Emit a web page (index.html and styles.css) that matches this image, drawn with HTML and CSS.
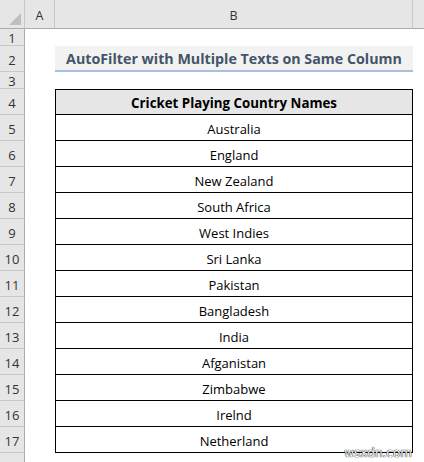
FILE: index.html
```html
<!DOCTYPE html>
<html>
<head>
<meta charset="utf-8">
<link rel="stylesheet" href="styles.css">
</head>
<body>
<div class="sheet">
  <div class="corner"><svg width="12" height="12" viewBox="0 0 12 12"><polygon points="12,0 12,12 0,12" fill="#bfbfbf"/></svg></div>
  <div class="colhead">A</div>
  <div class="colhead">B</div>
  <div class="colhead last"></div>

  <div class="rowhead">1</div><div class="cell"></div><div class="cell"></div><div class="cell"></div>
  <div class="rowhead">2</div><div class="cell"></div><div class="cell titlecell"><span class="title">AutoFilter with Multiple Texts on Same Column</span></div><div class="cell"></div>
  <div class="rowhead">3</div><div class="cell"></div><div class="cell"></div><div class="cell"></div>
  <div class="rowhead">4</div><div class="cell"></div><div class="cell thead">Cricket Playing Country Names</div><div class="cell"></div>
  <div class="rowhead">5</div><div class="cell"></div><div class="cell td">Australia</div><div class="cell"></div>
  <div class="rowhead">6</div><div class="cell"></div><div class="cell td">England</div><div class="cell"></div>
  <div class="rowhead">7</div><div class="cell"></div><div class="cell td">New Zealand</div><div class="cell"></div>
  <div class="rowhead">8</div><div class="cell"></div><div class="cell td">South Africa</div><div class="cell"></div>
  <div class="rowhead">9</div><div class="cell"></div><div class="cell td">West Indies</div><div class="cell"></div>
  <div class="rowhead">10</div><div class="cell"></div><div class="cell td">Sri Lanka</div><div class="cell"></div>
  <div class="rowhead">11</div><div class="cell"></div><div class="cell td">Pakistan</div><div class="cell"></div>
  <div class="rowhead">12</div><div class="cell"></div><div class="cell td">Bangladesh</div><div class="cell"></div>
  <div class="rowhead">13</div><div class="cell"></div><div class="cell td">India</div><div class="cell"></div>
  <div class="rowhead">14</div><div class="cell"></div><div class="cell td">Afganistan</div><div class="cell"></div>
  <div class="rowhead">15</div><div class="cell"></div><div class="cell td">Zimbabwe</div><div class="cell"></div>
  <div class="rowhead">16</div><div class="cell"></div><div class="cell td">Irelnd</div><div class="cell"></div>
  <div class="rowhead">17</div><div class="cell"></div><div class="cell td lastrow">Netherland</div><div class="cell"></div>
  <div class="rowhead"></div><div class="cell"></div><div class="cell"></div><div class="cell"></div>
</div>
<div class="watermark">wsxdn.com</div>
</body>
</html>
```
FILE: styles.css
```css
html, body {
  margin: 0;
  padding: 0;
  background: #ffffff;
}
body {
  width: 424px;
  height: 462px;
  overflow: hidden;
  position: relative;
  font-family: "Open Sans", "Liberation Sans", sans-serif;
}
.sheet {
  display: grid;
  grid-template-columns: 25px 30px 358px 11px;
  grid-template-rows: 29px 17px 26px 17px 26px repeat(13, 26px) 20px;
}
.corner {
  background: #e6e6e6;
  border-right: 1px solid #c8c8c8;
  border-bottom: 1px solid #ababab;
  box-sizing: border-box;
  display: flex;
  align-items: flex-end;
  justify-content: flex-end;
  padding: 0 3px 3px 0;
}
.colhead {
  background: #e6e6e6;
  border-right: 1px solid #c8c8c8;
  border-bottom: 1px solid #ababab;
  box-sizing: border-box;
  display: flex;
  align-items: center;
  justify-content: center;
  font-size: 12.5px;
  color: #333;
  padding-top: 2px;
}
.colhead.last { border-right: none; }
.rowhead {
  background: #e6e6e6;
  border-right: 1px solid #ababab;
  border-bottom: 1px solid #c8c8c8;
  box-sizing: border-box;
  display: flex;
  align-items: center;
  justify-content: center;
  font-size: 13px;
  color: #333;
  padding-top: 2px;
}
.cell {
  box-sizing: border-box;
}
.titlecell {
  background: #f2f2f2;
  border-bottom: 2px solid #a5c1df;
  display: flex;
  align-items: center;
  justify-content: center;
  padding-top: 1px;
}
.title {
  font-weight: bold;
  font-size: 14.25px;
  color: #44546a;
}
.thead {
  background: #e7e6e6;
  border: 1px solid #000;
  display: flex;
  align-items: center;
  justify-content: center;
  font-weight: bold;
  font-size: 13.3px;
  color: #000;
  padding-top: 2px;
}
.td {
  border-left: 1px solid #000;
  border-right: 1px solid #000;
  border-bottom: 1px solid #000;
  display: flex;
  align-items: center;
  justify-content: center;
  font-size: 13px;
  color: #000;
  padding-top: 2px;
}
.watermark {
  position: absolute;
  right: 12px;
  bottom: 2px;
  font-family: "DejaVu Sans", sans-serif;
  font-size: 12px;
  color: #fff;
  text-shadow: 0 0 1px #000, 0 0 1px #000;
}
```
